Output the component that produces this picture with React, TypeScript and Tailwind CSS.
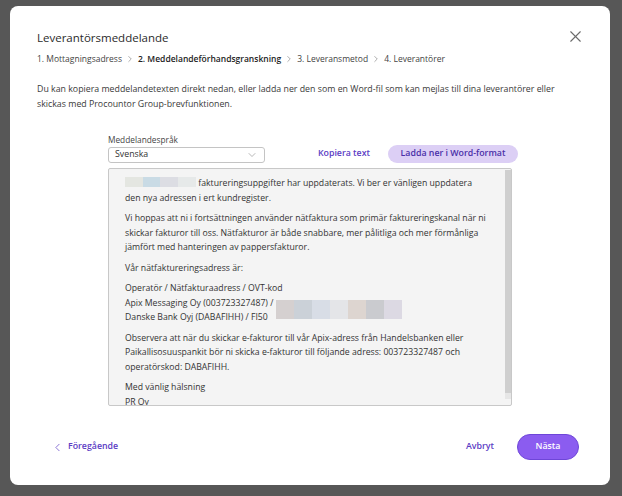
import React from 'react';
import { ChevronRight, ChevronLeft, ChevronDown, X } from 'lucide-react';

const steps = [
  { label: '1. Mottagningsadress', active: false },
  { label: '2. Meddelandeförhandsgranskning', active: true },
  { label: '3. Leveransmetod', active: false },
  { label: '4. Leverantörer', active: false },
];

const App: React.FC = () => {
  return (
    <div className="h-[496px] w-[622px] overflow-hidden bg-[#575757] pt-[6px] pl-[10px] font-['Open_Sans',sans-serif] text-[#333]">
      <div className="flex h-[479px] w-[600px] flex-col rounded-lg bg-white pl-[27px] pr-[26px]">
        <div className="mt-[23px] flex items-center justify-between">
          <h2 className="text-[11.5px] leading-[16px] text-[#2b2b2b]">Leverantörsmeddelande</h2>
          <X size={19} strokeWidth={1.4} className="mr-[-1px] mt-[-2px] text-[#6b6b6b]" />
        </div>

        <div className="mt-[6px] flex items-center text-[8.5px] leading-[13px] text-[#444]">
          {steps.map((s, i) => (
            <React.Fragment key={s.label}>
              {i > 0 && <ChevronRight size={10} strokeWidth={1.3} className="mx-[3px] text-[#666]" />}
              <span className={s.active ? 'font-semibold text-[#222]' : ''}>{s.label}</span>
            </React.Fragment>
          ))}
        </div>

        <p className="mt-[17px] text-[8.8px] leading-[15px] text-[#3a3a3a]">
          Du kan kopiera meddelandetexten direkt nedan, eller ladda ner den som en Word-fil som kan mejlas till dina leverantörer eller
          skickas med Procountor Group-brevfunktionen.
        </p>

        <div className="ml-[71px] mt-[22px] w-[404px]">
          <div className="text-[8.3px] leading-[11px] text-[#444]">Meddelandespråk</div>
          <div className="flex items-end justify-between">
            <div className="flex h-[16px] w-[157px] items-center justify-between rounded-[3px] border border-[#c4c4c4] px-[6px] text-[8.8px] text-[#333]">
              <span>Svenska</span>
              <ChevronDown size={12} strokeWidth={1.2} className="text-[#888]" />
            </div>
            <div className="flex items-center">
              <span className="text-[8.8px] font-semibold text-[#5b3cc4]">Kopiera text</span>
              <span className="ml-[18px] mr-[-6px] flex h-[18px] w-[130px] items-center justify-center rounded-full bg-[#dccff5] text-[8.8px] font-semibold text-[#4a2fa8]">
                Ladda ner i Word-format
              </span>
            </div>
          </div>

          <div className="mt-[5px] flex h-[238px] overflow-hidden rounded-[2px] border border-[#c8c8c8] bg-[#f4f4f4]">
            <div className="flex-1 pl-[16px] pr-[17px] pt-[7px] text-[8.7px] leading-[14.5px] text-[#333]">
              <p>
                <span className="inline-flex h-[10px] align-[-1px]">
                  <span className="w-[18px] bg-[#e4e6e1]" />
                  <span className="w-[17px] bg-[#c9dbe5]" />
                  <span className="w-[18px] bg-[#dcdde3]" />
                  <span className="w-[18px] bg-[#e6e9e9]" />
                </span>{' '}
                faktureringsuppgifter har uppdaterats. Vi ber er vänligen uppdatera den nya adressen i ert kundregister.
              </p>
              <p className="mt-[6px]">
                Vi hoppas att ni i fortsättningen använder nätfaktura som primär faktureringskanal när ni skickar fakturor till oss. Nätfakturor är både snabbare, mer pålitliga och mer förmånliga jämfört med hanteringen av pappersfakturor.
              </p>
              <p className="mt-[6px]">Vår nätfaktureringsadress är:</p>
              <p className="mt-[6px]">
                Operatör / Nätfakturaadress / OVT-kod
                <br />
                Apix Messaging Oy (003723327487) /{' '}
                <span className="relative inline-block w-0">
                  <span className="absolute left-[0px] top-[-6px] flex h-[19px]">
                    <span className="w-[18px] bg-[#d5d0d0]" />
                    <span className="w-[18px] bg-[#cbd1d8]" />
                    <span className="w-[18px] bg-[#d8dde6]" />
                    <span className="w-[18px] bg-[#e4e5e8]" />
                    <span className="w-[18px] bg-[#ddd5d0]" />
                    <span className="w-[18px] bg-[#cacbcf]" />
                    <span className="w-[18px] bg-[#dcd9e3]" />
                  </span>
                </span>
                <br />
                Danske Bank Oyj (DABAFIHH) / FI50
              </p>
              <p className="mt-[6px]">
                Observera att när du skickar e-fakturor till vår Apix-adress från Handelsbanken eller Paikallisosuuspankit bör ni skicka e-fakturor till följande adress: 003723327487 och operatörskod: DABAFIHH.
              </p>
              <p className="mt-[6px]">
                Med vänlig hälsning
                <br />
                PR Oy
              </p>
            </div>
            <div className="flex w-[6px] flex-col pb-[6px] pt-[1px]">
              <div className="flex-1 bg-[#cfcfcf]" />
              <div className="h-[6px] bg-[#e6e6e6]" />
            </div>
          </div>
        </div>

        <div className="mt-auto mb-[25px] flex items-center justify-between pl-[14px] pr-[5px]">
          <div className="flex items-center text-[8.8px] font-semibold text-[#5b3cc4]">
            <ChevronLeft size={13} strokeWidth={1.3} className="mr-[4px]" />
            <span>Föregående</span>
          </div>
          <div className="flex items-center">
            <span className="text-[8.8px] font-semibold text-[#5b3cc4]">Avbryt</span>
            <span className="ml-[23px] flex h-[26px] w-[62px] items-center justify-center rounded-full border border-[#6e46d8] bg-[#8b5cf0] text-[8.8px] font-semibold text-white">
              Nästa
            </span>
          </div>
        </div>
      </div>
    </div>
  );
};

export default App;
